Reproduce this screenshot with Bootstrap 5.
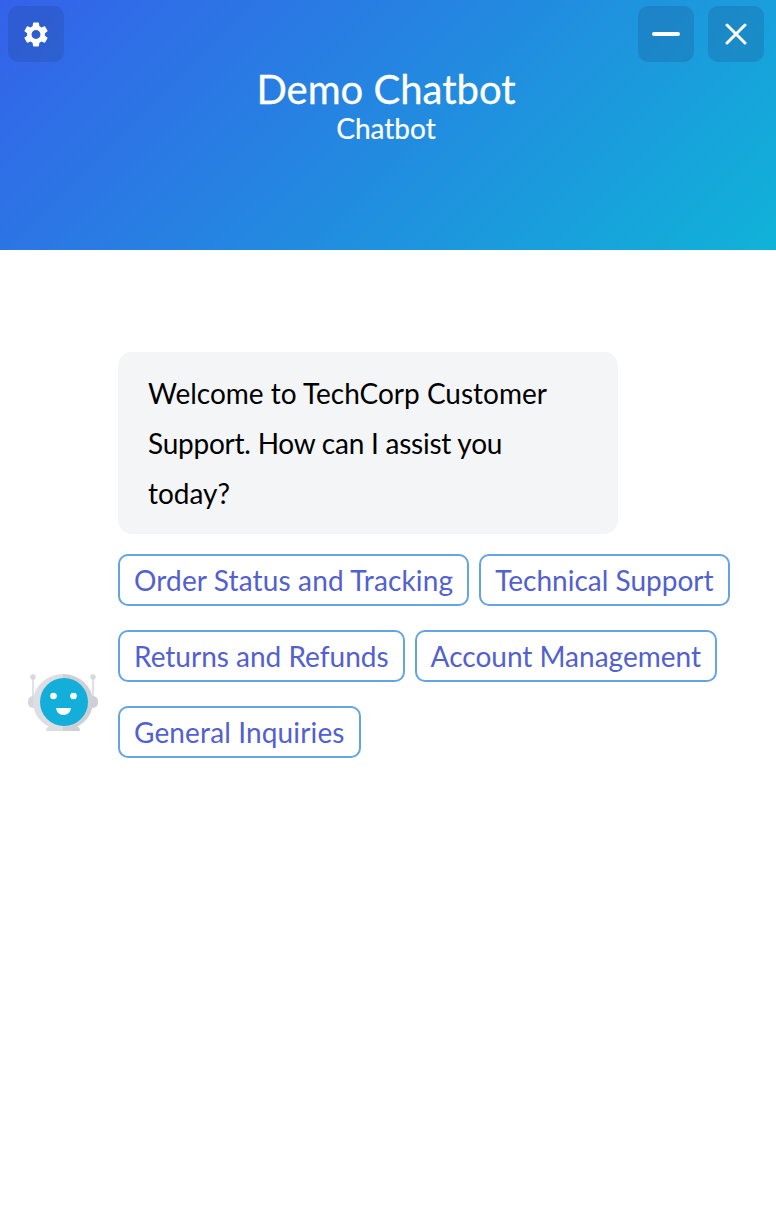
<!DOCTYPE html>
<html lang="en">
<head>
    <meta charset="UTF-8">
    <meta name="viewport" content="width=device-width, initial-scale=1.0">
    <title>Demo Chatbot</title>
    <link href="https://cdn.jsdelivr.net/npm/bootstrap@5.3.0/dist/css/bootstrap.min.css" rel="stylesheet">
    <style>
        body {
            font-family: Lato, "Liberation Sans", sans-serif;
            background: #fff;
        }
        .chat-header {
            height: 250px;
            padding: 6px 12px 0 8px;
            background: linear-gradient(135deg, #3561ea 0%, #2389e0 50%, #10b3d8 100%);
            color: #fff;
        }
        .head-btn {
            width: 56px;
            height: 56px;
            border: 0;
            border-radius: 10px;
            padding: 0;
            background: rgba(30, 60, 120, .2);
        }
        .head-actions {
            gap: 14px;
        }
        .head-title {
            margin-top: 4px;
        }
        .title-main {
            font-size: 40px;
            line-height: 46px;
            -webkit-text-stroke: .3px #fff;
        }
        .title-sub {
            font-size: 28px;
            line-height: 32px;
            -webkit-text-stroke: .2px #fff;
        }
        .chat-body {
            padding: 102px 28px 0 28px;
        }
        .bot-avatar {
            width: 70px;
            height: 58px;
            flex: none;
            margin-right: 20px;
            margin-bottom: 27px;
        }
        .msg-bubble {
            width: 500px;
            padding: 16px 30px;
            border-radius: 14px;
            background: #f4f5f7;
            color: #000;
            font-size: 28px;
            line-height: 50px;
        }
        .msg-tight {
            letter-spacing: -.24px;
        }
        .option-wrap {
            margin-top: 20px;
            column-gap: 10px;
            row-gap: 24px;
        }
        .option-btn {
            height: 52px;
            padding: 0 14px;
            border: 2px solid #62a4e4;
            border-radius: 10px;
            background: #fff;
            color: #5260d0;
            font-size: 28px;
            line-height: 48px;
        }
        .option-wide {
            letter-spacing: .14px;
        }
    </style>
</head>
<body>
    <div class="chat-header">
        <div class="d-flex justify-content-between">
            <button class="head-btn d-flex align-items-center justify-content-center" aria-label="Settings">
                <svg width="24" height="25" viewBox="2.600 1.900 18.800 20.200" fill="#fff"><path d="M19.140 12.940c.04-.3.06-.61.06-.94 0-.32-.02-.64-.07-.94l2.030-1.580c.18-.14.23-.41.12-.61l-1.920-3.320c-.12-.22-.37-.29-.59-.22l-2.390.96c-.5-.38-1.030-.7-1.620-.94l-.36-2.540c-.04-.24-.24-.41-.48-.41h-3.840c-.24 0-.43.17-.47.41l-.36 2.540c-.59.24-1.130.57-1.620.94l-2.390-.96c-.22-.08-.47 0-.59.22L2.740 8.870c-.12.21-.08.47.12.61l2.030 1.580c-.05.3-.09.63-.09.94s.02.64.07.94l-2.030 1.580c-.18.14-.23.41-.12.61l1.920 3.320c.12.22.37.29.59.22l2.390-.96c.5.38 1.030.7 1.620.94l.36 2.540c.05.24.24.41.48.41h3.840c.24 0 .44-.17.47-.41l.36-2.540c.59-.24 1.130-.56 1.620-.94l2.390.96c.22.08.47 0 .59-.22l1.920-3.320c.12-.22.07-.47-.12-.61l-2.010-1.580zM12 15.600c-1.980 0-3.600-1.620-3.600-3.600s1.620-3.600 3.600-3.600 3.600 1.620 3.600 3.600-1.620 3.600-3.600 3.600z"/></svg>
            </button>
            <div class="head-actions d-flex">
                <button class="head-btn d-flex align-items-center justify-content-center" aria-label="Minimize">
                    <svg width="28" height="4" viewBox="0 0 28 4"><rect width="28" height="4" rx="2" fill="#fff"/></svg>
                </button>
                <button class="head-btn d-flex align-items-center justify-content-center" aria-label="Close">
                    <svg width="22" height="22" viewBox="0 0 22 22" stroke="#fff" stroke-width="3" stroke-linecap="round"><path d="M2 2l18 18M20 2L2 20"/></svg>
                </button>
            </div>
        </div>
        <div class="head-title text-center">
            <div class="title-main">Demo Chatbot</div>
            <div class="title-sub">Chatbot</div>
        </div>
    </div>

    <div class="chat-body d-flex align-items-end">
        <svg class="bot-avatar" viewBox="0 0 70 58">
            <circle cx="5" cy="4" r="2.700" fill="#d5d8dc"/>
            <circle cx="65" cy="4" r="2.700" fill="#d5d8dc"/>
            <path d="M5 4v24M65 4v24" stroke="#d5d8dc" stroke-width="1.500"/>
            <rect x="0" y="23" width="12" height="12" rx="5" fill="#d5d8dc"/>
            <rect x="58" y="23" width="12" height="12" rx="5" fill="#cdd0d4"/>
            <path d="M18 58q0-5 5-5h12v5z" fill="#dcdee2"/>
            <path d="M35 58v-5h12q5 0 5 5z" fill="#cdd0d4"/>
            <path d="M35 1a30 28 0 0 0 0 56z" fill="#dcdee2"/>
            <path d="M35 1a30 28 0 0 1 0 56z" fill="#cdd0d4"/>
            <circle cx="36" cy="29" r="24" fill="#14aedb"/>
            <circle cx="25.500" cy="23" r="3.300" fill="#fff"/>
            <circle cx="45.500" cy="23" r="3.300" fill="#fff"/>
            <path d="M28 35h15q-1 7-7.500 7t-7.500-7z" fill="#fff"/>
        </svg>
        <div>
            <div class="msg-bubble">Welcome to TechCorp Customer <span class="msg-tight">Support. How can I assist you</span> today?</div>
            <div class="option-wrap d-flex flex-wrap">
                <button class="option-btn option-wide">Order Status and Tracking</button>
                <button class="option-btn">Technical Support</button>
                <button class="option-btn">Returns and Refunds</button>
                <button class="option-btn">Account Management</button>
                <button class="option-btn option-wide">General Inquiries</button>
            </div>
        </div>
    </div>

    <script src="https://cdn.jsdelivr.net/npm/bootstrap@5.3.0/dist/js/bootstrap.bundle.min.js"></script>
</body>
</html>
